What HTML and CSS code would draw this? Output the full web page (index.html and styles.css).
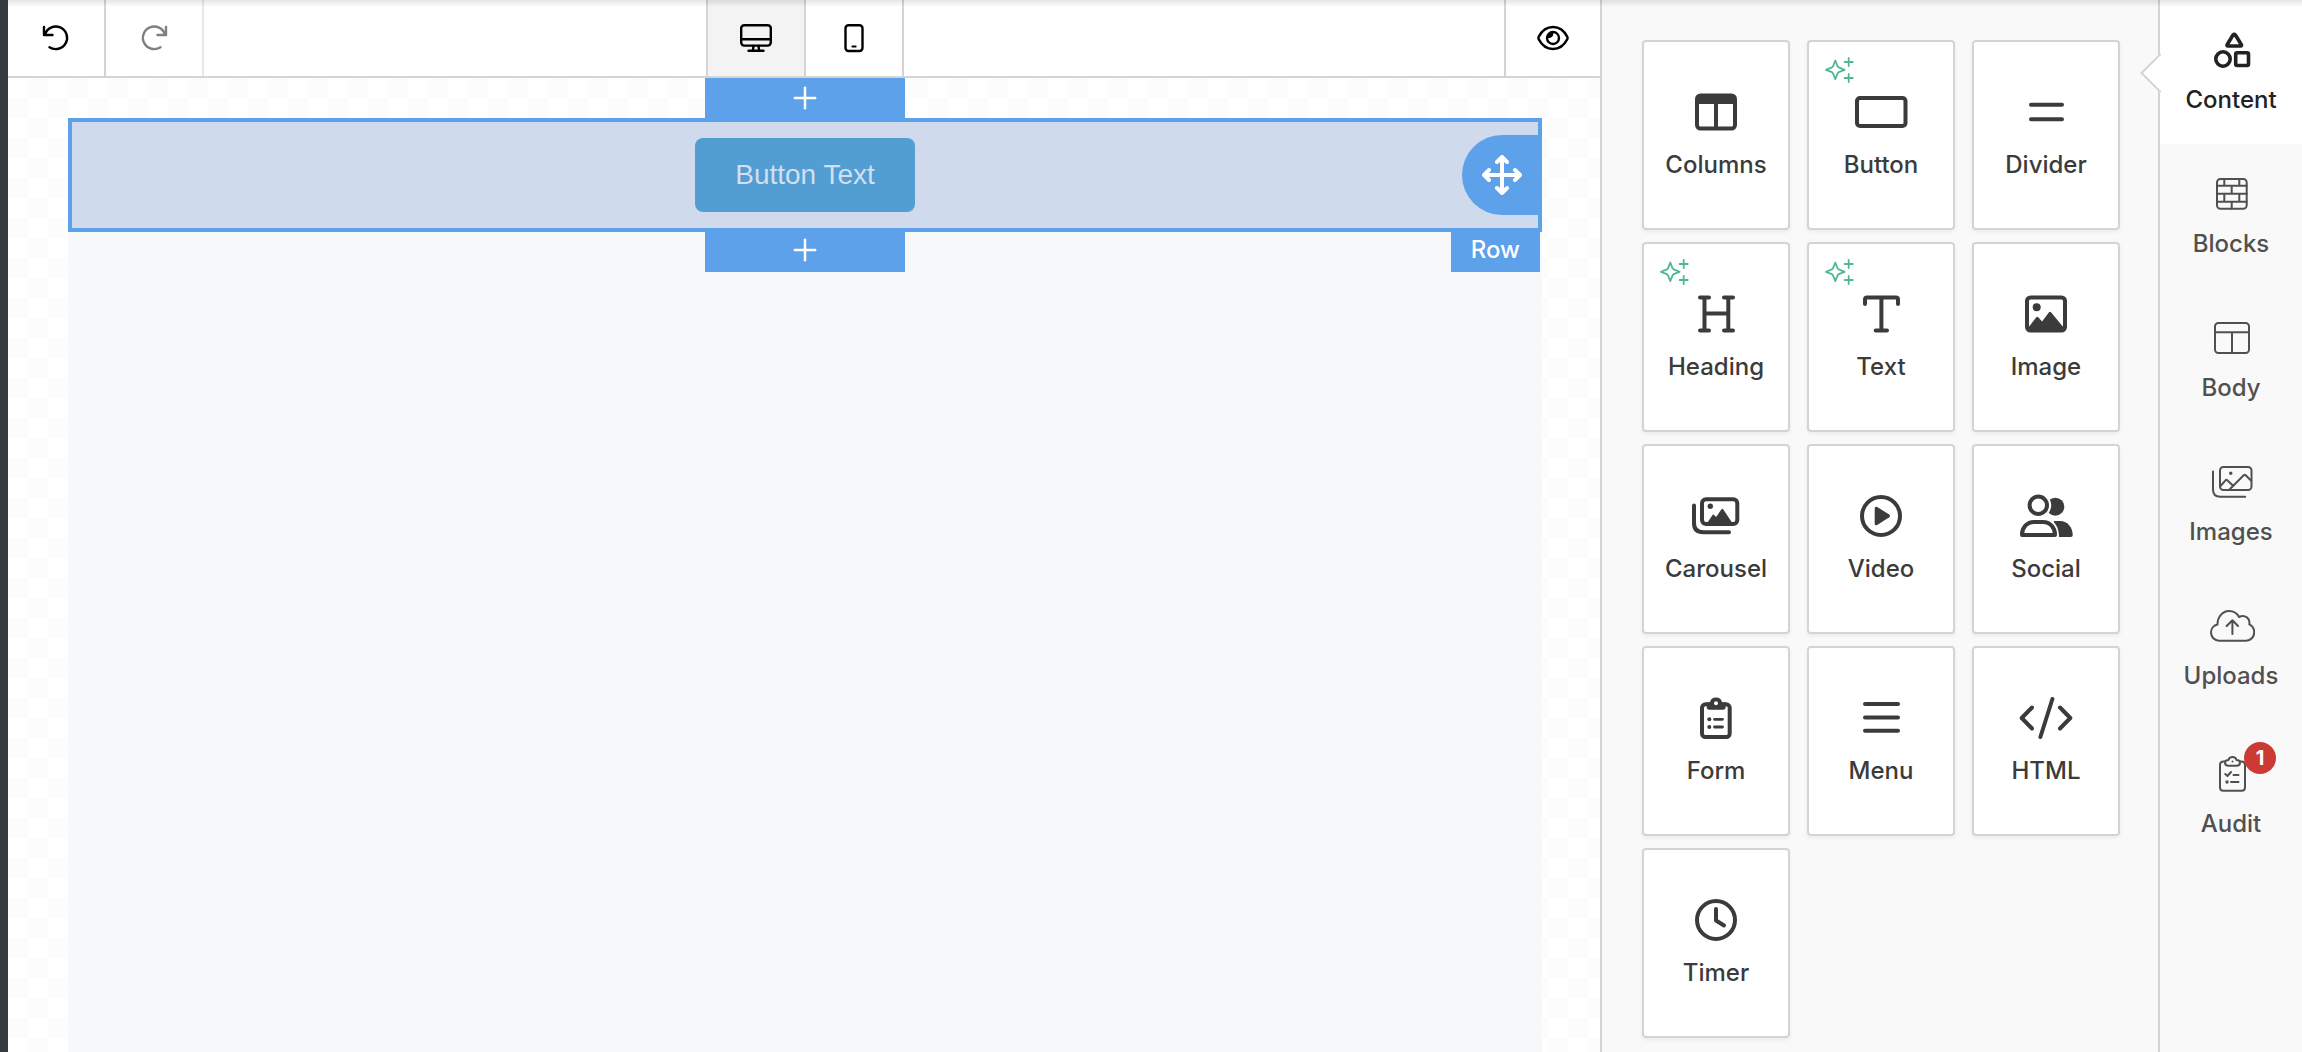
FILE: index.html
```html
<!DOCTYPE html>
<html lang="en">
<head>
    <meta charset="UTF-8">
    <meta name="viewport" content="width=device-width, initial-scale=1.0">
    <title>Email Editor</title>
    <link rel="stylesheet" href="styles.css">
</head>
<body>

<div class="app">

    <main class="editor">
        <div class="toolbar">
            <div class="toolbar-side">
                <button type="button" class="tool" aria-label="Undo">
                    <svg class="tool-icon" viewBox="0 0 32 32"><path d="M4 5v8h8.500M5 12.500A11.300 11.300 0 1 1 9.500 25.200"/></svg>
                </button>
                <button type="button" class="tool tool-redo" aria-label="Redo" disabled>
                    <svg class="tool-icon" viewBox="0 0 32 32"><path d="M28 5v8h-8.500M27 12.500A11.300 11.300 0 1 0 22.500 25.200"/></svg>
                </button>
            </div>
            <div class="devices">
                <button type="button" class="tool active" aria-label="Desktop">
                    <svg class="tool-icon" viewBox="0 0 32 32"><rect x="1.200" y="3.200" width="29.600" height="20.400" rx="3"/><path d="M1.200 17.300h29.600M13.500 24l-.6 4.500M18.500 24l.6 4.500M8.500 28.800h15"/></svg>
                </button>
                <button type="button" class="tool" aria-label="Mobile">
                    <svg class="tool-icon" viewBox="0 0 32 32"><rect x="7.500" y="3.200" width="17" height="25.800" rx="3"/><path d="M14.300 24.500h3.400" stroke-width="1.800"/></svg>
                </button>
            </div>
            <div class="toolbar-side toolbar-right">
                <button type="button" class="tool tool-preview" aria-label="Preview">
                    <svg class="tool-icon" viewBox="0 0 32 32"><path d="M1.800 14.600C5 8.500 10 5 16 5s11 3.500 14.200 9.600a3 3 0 0 1 0 2.800C27 23.500 22 27 16 27S5 23.500 1.800 17.400a3 3 0 0 1 0-2.800z"/><circle cx="16" cy="16" r="6"/><path d="M16 10.500c1 3-1 6-5.500 5.500 0-3 2.500-5.500 5.500-5.500z" fill="currentColor" stroke="none"/></svg>
                </button>
            </div>
        </div>

        <div class="canvas">
            <div class="page">
                <div class="row">
                    <button type="button" class="add-row add-above" aria-label="Add row above">
                        <svg class="plus" viewBox="0 0 24 24"><path d="M12 1.800v20.400M1.800 12h20.400"/></svg>
                    </button>
                    <a class="email-button" href="#">Button Text</a>
                    <button type="button" class="move" aria-label="Move row">
                        <svg class="move-icon" viewBox="0 0 40 40"><path d="M20 2.500v35M2.500 20h35M15 7l5-5 5 5M15 33l5 5 5-5M7 15l-5 5 5 5M33 15l5 5-5 5"/></svg>
                    </button>
                    <button type="button" class="add-row add-below" aria-label="Add row below">
                        <svg class="plus" viewBox="0 0 24 24"><path d="M12 1.800v20.400M1.800 12h20.400"/></svg>
                    </button>
                    <span class="row-label">Row</span>
                </div>
            </div>
        </div>
    </main>

    <section class="panel">
        <div class="tools">
            <button type="button" class="tile">
                <svg class="tile-icon" viewBox="0 0 56 48"><rect x="9" y="7.500" width="38" height="33" rx="3.500"/><path class="solid" d="M9 8h38v8H9z"/><path d="M28 14v26"/></svg>
                <span>Columns</span>
            </button>
            <button type="button" class="tile">
                <svg class="spark" viewBox="0 0 28 26"><path d="M10.300 2.500l2.300 5.800 1.100 1.100 5.900 2.400-5.900 2.400-1.100 1.100-2.300 5.800L8 15.300l-1.100-1.100L1 11.800l5.900-2.400L8 8.300zM23.700 0v8M19.700 4h8M23.700 16v8M19.700 20h8"/></svg>
                <svg class="tile-icon" viewBox="0 0 56 48"><rect x="4" y="10" width="48.500" height="28" rx="3"/></svg>
                <span>Button</span>
            </button>
            <button type="button" class="tile">
                <svg class="tile-icon" viewBox="0 0 56 48"><path d="M13 16.700h31M13 31.200h31"/></svg>
                <span>Divider</span>
            </button>
            <button type="button" class="tile">
                <svg class="spark" viewBox="0 0 28 26"><path d="M10.300 2.500l2.300 5.800 1.100 1.100 5.900 2.400-5.900 2.400-1.100 1.100-2.300 5.800L8 15.300l-1.100-1.100L1 11.800l5.900-2.400L8 8.300zM23.700 0v8M19.700 4h8M23.700 16v8M19.700 20h8"/></svg>
                <svg class="tile-icon" viewBox="0 0 56 48"><path d="M12 7.500h9M36 7.500h9M12 40.600h9M36 40.600h9M16.500 7.500v33M40.300 7.500v33M16.500 23.400h24"/></svg>
                <span>Heading</span>
            </button>
            <button type="button" class="tile">
                <svg class="spark" viewBox="0 0 28 26"><path d="M10.300 2.500l2.300 5.800 1.100 1.100 5.900 2.400-5.900 2.400-1.100 1.100-2.300 5.800L8 15.300l-1.100-1.100L1 11.800l5.900-2.400L8 8.300zM23.700 0v8M19.700 4h8M23.700 16v8M19.700 20h8"/></svg>
                <svg class="tile-icon" viewBox="0 0 56 48"><path d="M12 14V9.500q0-2 2-2h29q2 0 2 2V14M28.400 7.500v33M22.700 40.600H34"/></svg>
                <span>Text</span>
            </button>
            <button type="button" class="tile">
                <svg class="tile-icon" viewBox="0 0 56 48"><rect x="9" y="7.500" width="38" height="33" rx="3.500"/><circle class="solid" cx="18.700" cy="17.300" r="4"/><path class="solid" d="M10 38l8.300-10.800q1-1 2 0l3.800 4.200L31 22.300q1-1.200 2 0L46 38v3H10z"/></svg>
                <span>Image</span>
            </button>
            <button type="button" class="tile">
                <svg class="tile-icon" viewBox="0 0 56 48"><rect x="14" y="7.300" width="35.300" height="24.700" rx="4"/><circle class="solid" cx="22.300" cy="14.300" r="2.700"/><path class="solid" d="M18.500 32l6-9q.8-1 1.600 0l2 2 5.200-7.600q1-1.200 2 0L45 32z"/><path d="M6 13.500V31q0 9.300 9.300 9.300H41"/></svg>
                <span>Carousel</span>
            </button>
            <button type="button" class="tile">
                <svg class="tile-icon" viewBox="0 0 56 48"><circle cx="28" cy="24" r="19"/><path class="solid" d="M21.700 16.500c0-1.500 1.200-2.300 2.500-1.500l12 7.600c1 .7 1 2 0 2.700l-12 7.600c-1.300.7-2.500 0-2.500-1.500z"/></svg>
                <span>Video</span>
            </button>
            <button type="button" class="tile">
                <svg class="tile-icon" viewBox="0 0 56 48"><circle class="solid" cx="37.300" cy="14.700" r="9"/><path class="solid" d="M36 29h6c8 0 12.700 7 12.700 14 0 1.300-.7 2-2 2H36z"/><circle cx="20.300" cy="13.300" r="12.900" fill="#fff" stroke="none"/><path d="M12 27h17c8 1 12 9 12 18H12z" fill="#fff" stroke="none"/><circle cx="20.300" cy="13.300" r="8.700"/><path d="M4 42.500C4 35.500 9 30 16 30h9c7 0 12 5.500 12 12.500v.5H4z"/></svg>
                <span>Social</span>
            </button>
            <button type="button" class="tile">
                <svg class="tile-icon" viewBox="0 0 56 48"><rect x="14" y="10.300" width="27.700" height="32.700" rx="3.500"/><path class="solid" d="M18.700 8.500h3.200a6.200 6.200 0 0 1 12.200 0h3.600v4.500q0 2.700-2.700 2.700H21.400q-2.700 0-2.700-2.700z"/><circle cx="28" cy="9.300" r="2" fill="#fff" stroke="none"/><circle class="solid" cx="21.300" cy="25.300" r="2"/><circle class="solid" cx="21.300" cy="33" r="2"/><path d="M26.500 25.300h8M26.500 33h8" stroke-width="2.800"/></svg>
                <span>Form</span>
            </button>
            <button type="button" class="tile">
                <svg class="tile-icon" viewBox="0 0 56 48"><path d="M12 10h33M12 23.400h33M12 36.700h33"/></svg>
                <span>Menu</span>
            </button>
            <button type="button" class="tile">
                <svg class="tile-icon" viewBox="0 0 56 48"><path d="M14 13.500L3.700 24 14 34.500M42 13.500L52.300 24 42 34.500M34.400 5l-12 38"/></svg>
                <span>HTML</span>
            </button>
            <button type="button" class="tile">
                <svg class="tile-icon" viewBox="0 0 56 48"><circle cx="28" cy="24" r="19"/><path d="M28 13v11.500l8 5"/></svg>
                <span>Timer</span>
            </button>
        </div>
    </section>

    <nav class="tabs">
        <button type="button" class="tab tab-active">
            <svg class="tab-icon" viewBox="0 0 48 40"><path d="M26 5q1.200-1.500 2.400 0l6 9.700q.5 1.300-.9 1.300H21q-1.400 0-.9-1.300z"/><circle cx="16" cy="29" r="7.200"/><rect x="28.700" y="22.700" width="12.800" height="12.800" rx="1.500"/></svg>
            <span>Content</span>
        </button>
        <button type="button" class="tab">
            <svg class="tab-icon" viewBox="0 0 48 40"><rect x="10" y="5" width="29.700" height="29.700" rx="3.500"/><path d="M10 11.700h29.700M10 19.700h29.700M10 27.700h29.700M17.300 5v6.700M32.300 5v6.700M24.700 11.700v8M17.300 19.700v8M32.300 19.700v8M24.700 27.700v7"/></svg>
            <span>Blocks</span>
        </button>
        <button type="button" class="tab">
            <svg class="tab-icon" viewBox="0 0 48 40"><rect x="8" y="5" width="34" height="30" rx="3.500"/><path d="M8 14.300h34M25 14.300V35"/></svg>
            <span>Body</span>
        </button>
        <button type="button" class="tab">
            <svg class="tab-icon" viewBox="0 0 48 40"><rect x="13" y="5" width="31.500" height="23" rx="3.500"/><path d="M14 23.500l4.500-5.200q.9-.9 1.800 0l6 5.700M22 28l14.700-14.700q1-.9 2 0l5.500 5.500M6 9.500v18q0 7.200 7.200 7.200h25"/><circle class="solid" cx="23.700" cy="11.300" r="1.700"/></svg>
            <span>Images</span>
        </button>
        <button type="button" class="tab">
            <svg class="tab-icon" viewBox="0 0 48 40"><path d="M12 34.700C7.500 34.700 4 31 4 26.500c0-4 2.700-7.200 6.500-8C10.500 11 15.500 5 22 5c4.500 0 8 2.300 10 6 6-2.800 11.500 1.500 10.300 7.300 3 1.500 4.900 4.500 4.900 8 0 4.700-3.500 8.400-8 8.400zM25.400 28V14.500M19.700 20l5.700-5.700L31 20"/></svg>
            <span>Uploads</span>
        </button>
        <button type="button" class="tab tab-audit">
            <svg class="tab-icon" viewBox="0 0 48 40"><path d="M18 7.500h-1.500Q13 7.500 13 11v22.500q0 3.200 3.500 3.200h18q3.500 0 3.500-3.200V11q0-3.500-3.500-3.500H33"/><path d="M18 8.500c0-1.800 1.500-2.500 3.500-2.500 1-4 7-4 8 0 2 0 3.500.7 3.500 2.500 0 2-1.500 3.300-3.500 3.300h-8c-2 0-3.500-1.300-3.500-3.300zM18.300 20l2.200 2 3.500-4M26.500 21h5M24 28h7.500"/><circle class="solid" cx="20" cy="28" r="1.700"/><circle class="solid" cx="25.500" cy="7.500" r="1"/></svg>
            <span>Audit</span>
            <span class="badge">1</span>
        </button>
    </nav>

</div>

</body>
</html>
```
FILE: styles.css
```css
* {
    box-sizing: border-box;
}

body {
    margin: 0;
    font-family: Inter, "Liberation Sans", sans-serif;
    font-size: 24px;
    line-height: 28px;
    font-weight: 500;
}

button {
    margin: 0;
    padding: 0;
    border: none;
    border-radius: 0;
    font: inherit;
    cursor: pointer;
}

svg {
    display: block;
    flex: none;
    fill: none;
    stroke: currentColor;
    stroke-linecap: round;
    stroke-linejoin: round;
}

.solid {
    fill: currentColor;
    stroke: none;
}

.app {
    position: relative;
    display: flex;
    height: 100vh;
    overflow: hidden;
    border-left: 8px solid #353c3e;
}

.app::after {
    content: "";
    position: absolute;
    top: 0;
    left: 0;
    right: 0;
    height: 7px;
    background: linear-gradient(rgba(0, 0, 0, 0.1), rgba(0, 0, 0, 0));
    pointer-events: none;
}

.editor {
    flex: 1;
    min-width: 0;
    display: flex;
    flex-direction: column;
}

/* toolbar */
.toolbar {
    display: flex;
    height: 78px;
    background-color: #fff;
    border-bottom: 2px solid #d4d4d4;
}

.toolbar-side {
    flex: 1;
    display: flex;
}

.toolbar-right {
    justify-content: flex-end;
}

.devices {
    display: flex;
    border-left: 2px solid #d4d4d4;
}

.tool {
    display: flex;
    align-items: center;
    justify-content: center;
    width: 98px;
    color: #000;
    background-color: #fff;
    border-right: 2px solid #d4d4d4;
}

.tool.active {
    background-color: #f3f3f3;
}

.tool-redo {
    color: #808080;
    border-right-color: #e8e8e8;
}

.tool-preview {
    border-left: 2px solid #d4d4d4;
}

.tool-icon {
    width: 32px;
    height: 32px;
    stroke-width: 2.4;
}

/* canvas */
.canvas {
    flex: 1;
    display: flex;
    padding: 40px 58px 0 60px;
    border-right: 2px solid #d4d4d4;
    background: repeating-conic-gradient(#fff 0 25%, #fcfcfc 0 50%) 20px 0 / 40px 40px;
}

.page {
    flex: 1;
    background-color: #f7f8fa;
}

.row {
    position: relative;
    display: flex;
    justify-content: center;
    padding: 16px;
    background-color: #cfdaec;
    border: 4px solid #5ca1ea;
}

.email-button {
    padding: 20px 40px;
    border-radius: 8px;
    background-color: #529ed3;
    color: #d3dff0;
    font: 28px/34px "Liberation Sans", Arial, sans-serif;
    text-decoration: none;
}

.add-row {
    position: absolute;
    left: 50%;
    width: 200px;
    height: 44px;
    margin-left: -100px;
    display: flex;
    align-items: center;
    justify-content: center;
    background-color: #5ca1ea;
    color: #fff;
}

.add-above {
    bottom: 100%;
    padding-bottom: 4px;
}

.add-below {
    top: 100%;
}

.plus {
    width: 24px;
    height: 24px;
    stroke-width: 2.5;
}

.move {
    position: absolute;
    right: -4px;
    top: 50%;
    width: 80px;
    height: 80px;
    margin-top: -40px;
    display: flex;
    align-items: center;
    justify-content: center;
    border-radius: 40px 0 0 40px;
    background-color: #5ca1ea;
    color: #fff;
}

.move-icon {
    width: 40px;
    height: 40px;
    stroke-width: 4;
}

.row-label {
    position: absolute;
    right: -2px;
    top: 100%;
    padding: 8px 20px;
    background-color: #5ca1ea;
    color: #fff;
}

/* content tools */
.panel {
    width: 556px;
    padding: 40px 38px 0 40px;
    background-color: #f9f9f9;
}

.tools {
    display: grid;
    grid-template-columns: repeat(3, 1fr);
    gap: 12px 17px;
}

.tile {
    position: relative;
    display: flex;
    flex-direction: column;
    align-items: center;
    gap: 15px;
    height: 190px;
    padding-top: 46px;
    border: 2px solid #d4d4d4;
    border-radius: 4px;
    background-color: #fff;
    color: #3b3b3b;
    box-shadow: 0 2px 4px rgba(0, 0, 0, 0.06);
}

.tile-icon {
    width: 56px;
    height: 48px;
    stroke-width: 4;
}

.spark {
    position: absolute;
    top: 16px;
    left: 16px;
    width: 28px;
    height: 26px;
    color: #4fb795;
    stroke-width: 1.8;
    overflow: visible;
}

/* right tabs */
.tabs {
    width: 144px;
    border-left: 2px solid #d4d4d4;
    background-color: #f9f9f9;
}

.tab {
    position: relative;
    display: flex;
    flex-direction: column;
    align-items: center;
    gap: 16px;
    width: 100%;
    height: 144px;
    padding-top: 30px;
    background: none;
    color: #505050;
}

.tab-active {
    background-color: #fff;
    color: #222;
}

.tab-active::before {
    content: "";
    position: absolute;
    left: -14px;
    top: 59px;
    width: 26px;
    height: 26px;
    background-color: #fff;
    border: solid #d4d4d4;
    border-width: 0 0 2px 2px;
    transform: rotate(45deg);
}

.tab-icon {
    width: 48px;
    height: 40px;
    stroke-width: 2;
}

.tab-active .tab-icon {
    stroke-width: 3.6;
}

.tab-audit {
    height: 148px;
    padding-top: 34px;
}

.badge {
    position: absolute;
    top: 22px;
    right: 26px;
    width: 32px;
    height: 32px;
    border-radius: 50%;
    background-color: #cc3b33;
    color: #fff;
    font-size: 20px;
    font-weight: 700;
    line-height: 32px;
    text-align: center;
}
```
